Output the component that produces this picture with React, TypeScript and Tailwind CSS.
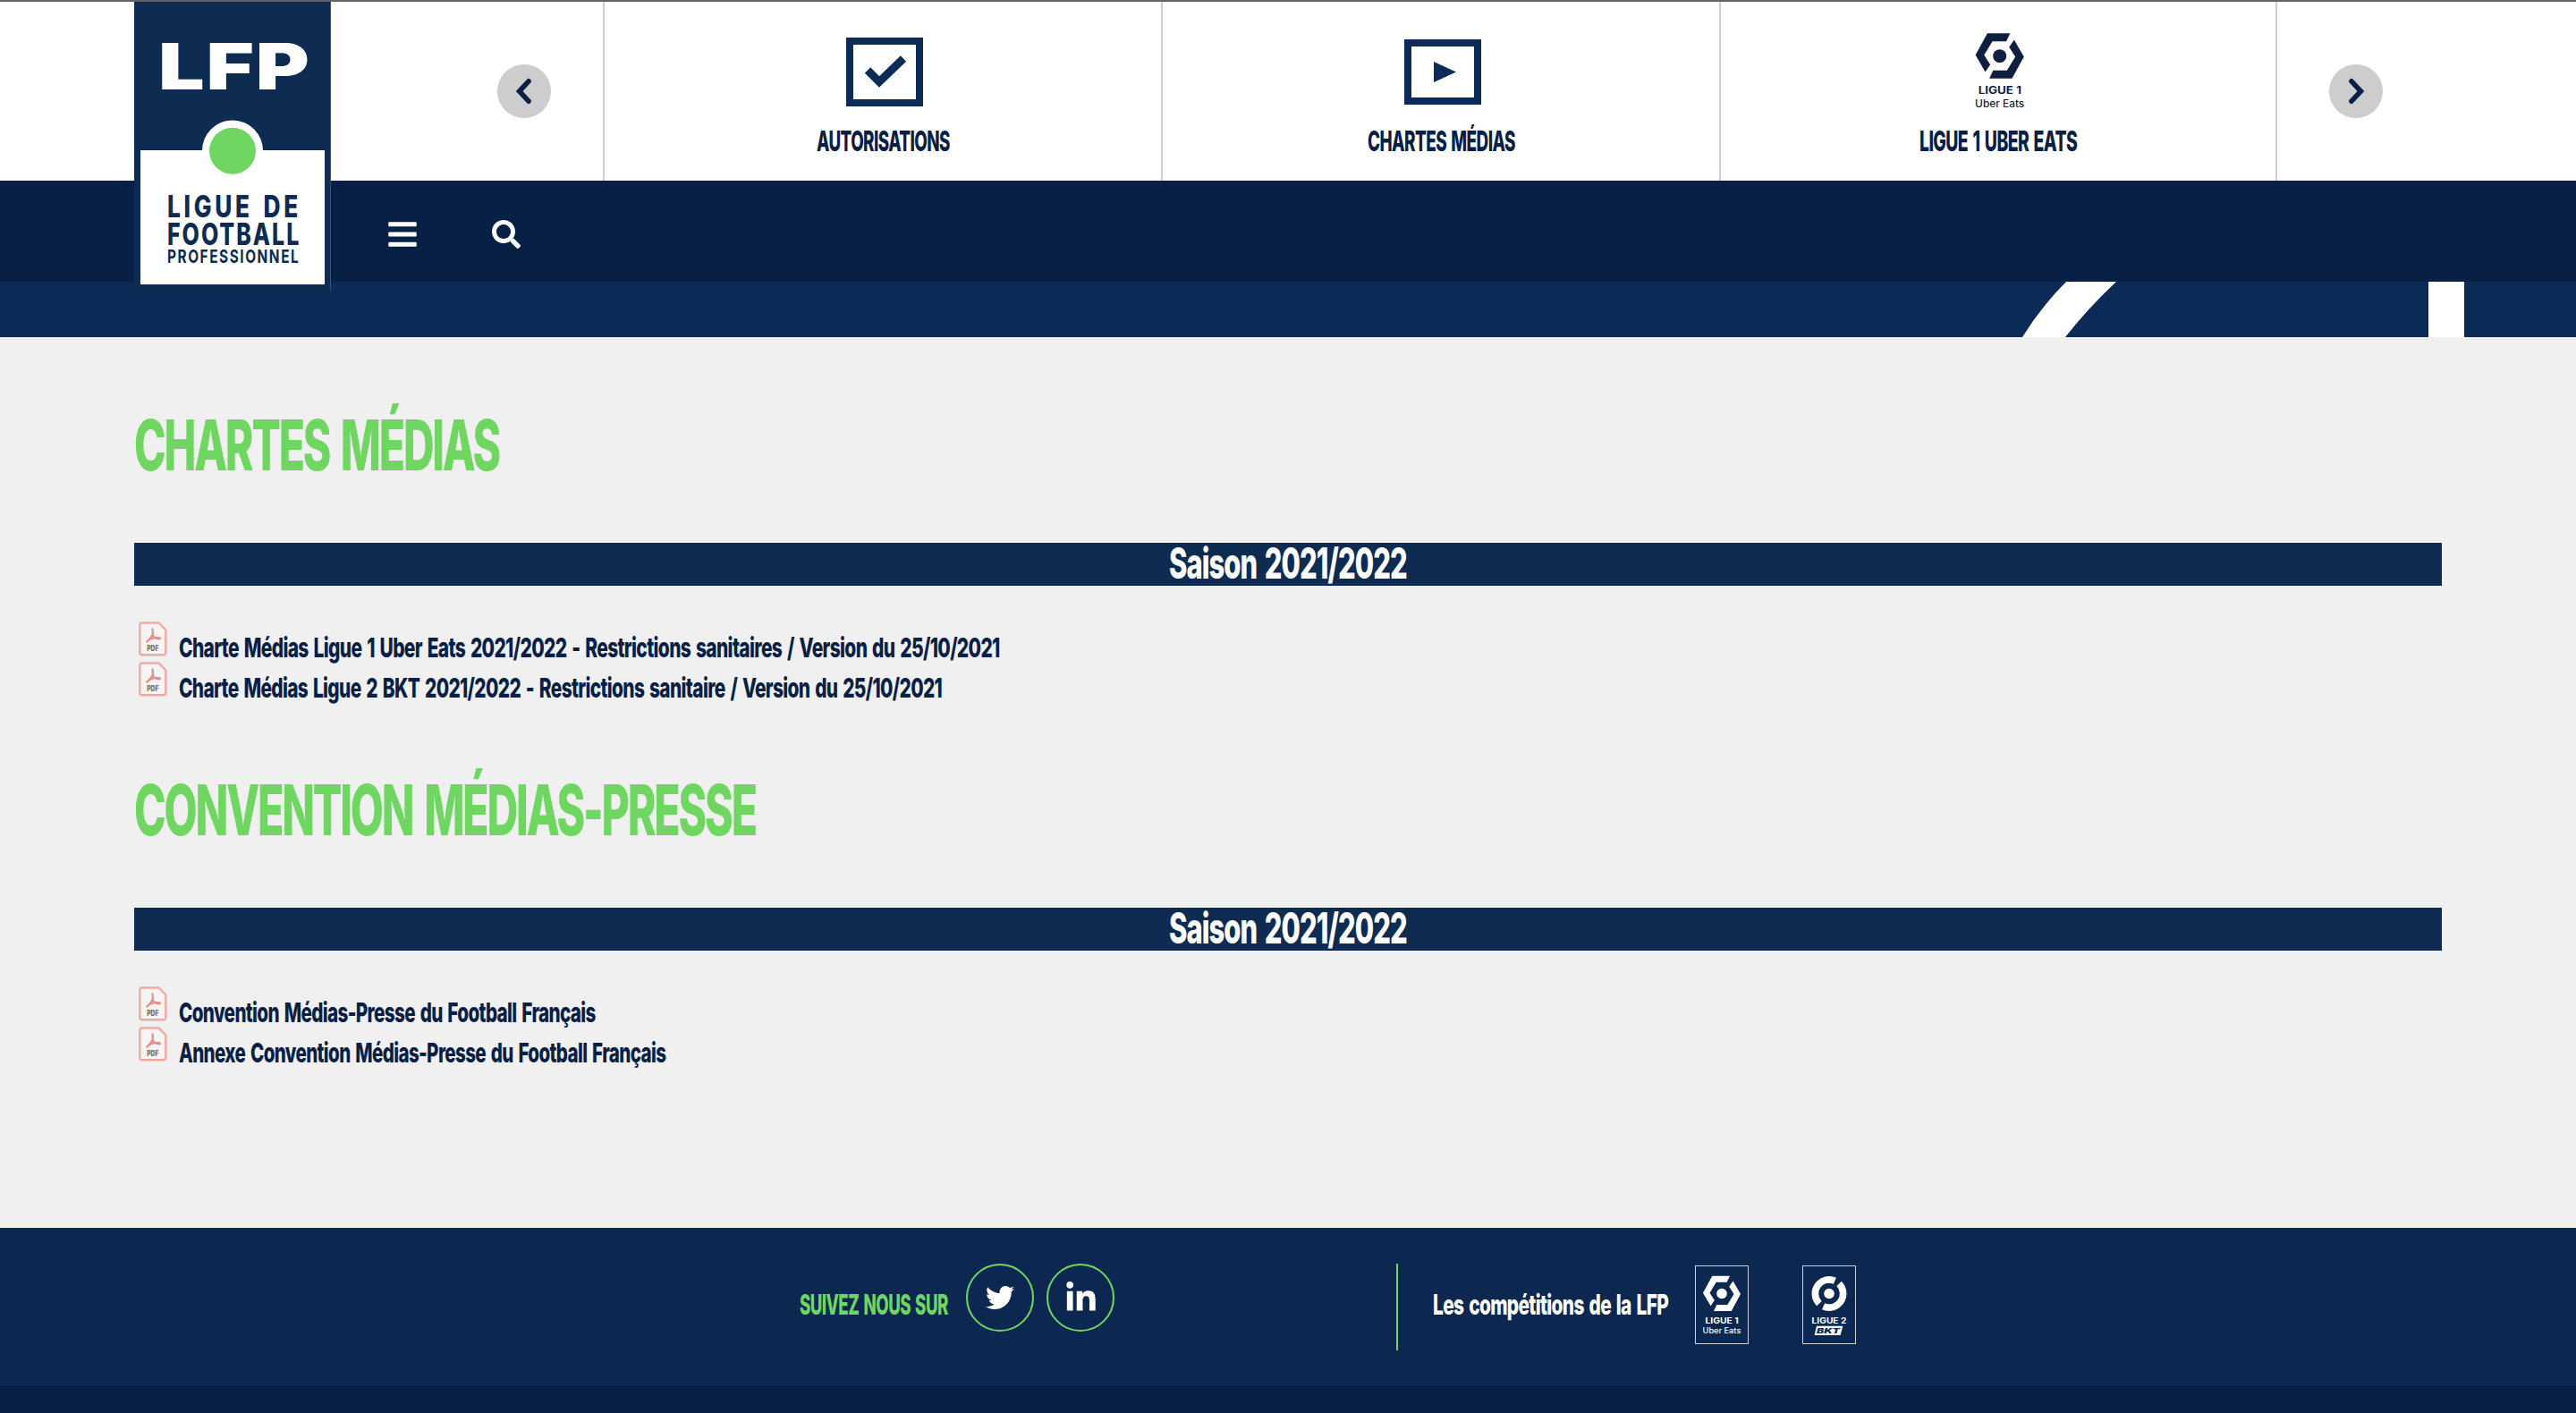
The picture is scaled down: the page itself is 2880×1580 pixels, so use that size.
import { useLayoutEffect, useRef, useState, type ReactNode } from "react";
import { FaBars, FaSearch, FaTwitter, FaLinkedinIn } from "react-icons/fa";

/* Condenses a line of text horizontally so that it occupies the given width. */
function Condensed({ children, width, className = "" }: { children: ReactNode; width: number; className?: string }) {
  const ref = useRef<HTMLSpanElement>(null);
  const [scale, setScale] = useState(0.6);
  useLayoutEffect(() => {
    if (ref.current) setScale(width / ref.current.offsetWidth);
  }, [width]);
  return (
    <span className={`block whitespace-nowrap [word-spacing:0.09em] ${className}`} style={{ width }}>
      <span ref={ref} className="inline-block origin-left" style={{ transform: `scaleX(${scale})` }}>
        {children}
      </span>
    </span>
  );
}

function LfpLogo() {
  return (
    <div className="absolute top-[2px] left-[150px] h-[323px] w-[220px]">
      <svg viewBox="0 0 220 323" className="absolute inset-0 h-[323px] w-[220px]">
        <rect width="220" height="323" fill="#0e2b52" />
        <rect x="219" width="1" height="323" fill="#3a5475" />
        <rect x="7" y="166" width="206" height="150" fill="#fff" />
        <circle cx="110" cy="166.5" r="34" fill="#fff" />
        <circle cx="110" cy="166.7" r="26" fill="#70d662" />
      </svg>
      <div className="relative flex flex-col pl-[37px] text-[#0e2b52]">
        <Condensed width={170} className="-ml-[10px] pt-[32px] text-[71.5px] leading-[80px] font-black tracking-[0.02em] text-white">LFP</Condensed>
        <Condensed width={150} className="mt-[104px] text-[33.5px] leading-[27px] font-extrabold tracking-[0.14em]">LIGUE DE</Condensed>
        <Condensed width={149} className="mt-[2px] text-[33.5px] leading-[30px] font-extrabold tracking-[0.08em]">FOOTBALL</Condensed>
        <Condensed width={148} className="text-[20.5px] leading-[20px] font-bold tracking-[0.1em]">PROFESSIONNEL</Condensed>
      </div>
    </div>
  );
}

function Ligue1Logo({ className }: { className: string }) {
  const half = "M19.3 11.8H39L35.7 18.8H23.7L16.5 30.7L21.8 39L17.5 45.3L9 30.7Z";
  return (
    <svg viewBox="0 0 60 88" className={className} fill="currentColor" fontFamily="Inter, sans-serif">
      <path d={half} />
      <path d={half} transform="rotate(180 30 31.4)" />
      <circle cx="30" cy="31.5" r="5.8" />
      <text x="11.4" y="64.5" fontSize="8.7" fontWeight="700" textLength="37.4" lengthAdjust="spacingAndGlyphs">LIGUE 1</text>
      <text x="8.6" y="75.6" fontSize="8.6" fontWeight="500" textLength="42.8" lengthAdjust="spacingAndGlyphs">Uber Eats</text>
    </svg>
  );
}

function Ligue2Logo({ className }: { className: string }) {
  return (
    <svg viewBox="0 0 60 88" className={className} fill="currentColor" fontFamily="Inter, sans-serif">
      <g fill="none" stroke="currentColor" strokeWidth="7.6">
        <path d="M36.4 17.2A15.7 15.7 0 0 0 18.9 42.6" />
        <path d="M23.6 45.8A15.7 15.7 0 0 0 41.1 20.4" />
      </g>
      <circle cx="30" cy="31.5" r="5.8" />
      <text x="10.6" y="64.5" fontSize="8.7" fontWeight="700" textLength="38.8" lengthAdjust="spacingAndGlyphs">LIGUE 2</text>
      <path d="M16 67.7H45.3L42.6 78H13.6Z" />
      <text x="16" y="75.8" fontSize="8.2" fontWeight="900" fontStyle="italic" fill="#0c2850" textLength="26" lengthAdjust="spacingAndGlyphs">BKT</text>
    </svg>
  );
}

function PdfIcon() {
  return (
    <svg viewBox="0 0 32 39" className="mt-px h-[39px] w-8 shrink-0" fill="none">
      <path d="M4 1.5H22.5L30.3 9.5V34.5Q30.3 37.2 27.6 37.2H4Q1.3 37.2 1.3 34.5V4.2Q1.3 1.5 4 1.5Z" fill="#f6f4f4" stroke="#efaaa4" strokeWidth="2.4" />
      <path d="M15.4 8.5C17.3 14 14.6 18.5 9.2 22.6M15.6 14.5C16.8 18 19.5 19.6 23.8 19.4M9.5 22C13.5 18.8 18 17.2 23.8 18.4" stroke="#e68f88" strokeWidth="2.2" strokeLinecap="round" />
      <text x="9.2" y="32.6" fontSize="8.4" fontWeight="900" fontFamily="Inter, sans-serif" fill="#777" textLength="13.2" lengthAdjust="spacingAndGlyphs">PDF</text>
    </svg>
  );
}

function Arrow({ d }: { d: string }) {
  return (
    <button className="flex size-[60px] items-center justify-center rounded-full bg-[#cdcdcd]">
      <svg viewBox="0 0 60 60" className="size-[60px]" fill="none" stroke="#082045" strokeWidth="5.6" strokeLinecap="round" strokeLinejoin="miter">
        <path d={d} />
      </svg>
    </button>
  );
}

function CheckIcon() {
  return (
    <svg viewBox="0 0 86 77" className="mt-[40px] ml-[4px] h-[77px] w-[86px]" fill="none" stroke="#0c2b57">
      <rect x="4" y="4" width="78" height="69" strokeWidth="8" />
      <path d="M24 36.5L37 49.5L64 23.5" strokeWidth="9" />
    </svg>
  );
}

function PlayIcon() {
  return (
    <svg viewBox="0 0 86 73" className="mt-[42px] ml-[4px] h-[73px] w-[86px]" fill="none" stroke="#0c2b57">
      <rect x="4" y="4" width="78" height="65" strokeWidth="8" />
      <path d="M33 25L58 36.5L33 48Z" fill="#0c2b57" stroke="none" />
    </svg>
  );
}

function Slide({ label, width, icon }: { label: string; width: number; icon: ReactNode }) {
  return (
    <div className="flex h-full w-[624px] shrink-0 flex-col items-center border-r-2 border-[#cdcdcd] last:w-[622px]">
      <div className="h-[133px] shrink-0">{icon}</div>
      <Condensed width={width} className="text-[31.5px] leading-[46px] font-extrabold tracking-[-0.03em] text-[#082045]">{label}</Condensed>
    </div>
  );
}

function DocumentSection({ title, titleWidth, docs }: { title: string; titleWidth: number; docs: { name: string; width: number }[] }) {
  return (
    <section>
      <h1>
        <Condensed width={titleWidth} className="pt-px text-[79px] leading-[80px] font-extrabold tracking-[-0.045em] text-[#70d662]">{title}</Condensed>
      </h1>
      <div className="mt-[70px] flex h-12 justify-center bg-[#0e2b52]">
        <Condensed width={266} className="text-[47.5px] leading-[46px] font-extrabold tracking-[-0.03em] text-white">Saison 2021/2022</Condensed>
      </div>
      <ul className="mt-[39px]">
        {docs.map((doc) => (
          <li key={doc.name} className="flex h-[45px] gap-[13px] pl-[5px]">
            <PdfIcon />
            <Condensed width={doc.width} className="pt-[7px] text-[30.5px] leading-[46px] font-extrabold tracking-[-0.03em] text-[#082045]">{doc.name}</Condensed>
          </li>
        ))}
      </ul>
    </section>
  );
}

export default function App() {
  return (
    <div className="relative flex h-[1580px] w-[2880px] flex-col overflow-hidden bg-[#f0f0f0] font-['Inter',sans-serif]">
      <header>
        <div className="flex h-[202px] border-t-2 border-[#646267] bg-white">
          <div className="flex w-[676px] items-center justify-end border-r-2 border-[#cdcdcd] pr-[58px]">
            <Arrow d="M35 18.8L24.6 30L35 41.2" />
          </div>
          <div className="flex w-[1870px]">
            <Slide label="AUTORISATIONS" width={149} icon={<CheckIcon />} />
            <Slide label="CHARTES MÉDIAS" width={165} icon={<PlayIcon />} />
            <Slide label="LIGUE 1 UBER EATS" width={176} icon={<Ligue1Logo className="mt-[20px] ml-[4px] h-[113.5px] w-[77.4px] text-[#101f40]" />} />
          </div>
          <div className="flex items-center pl-[58px]">
            <Arrow d="M25 18.8L35.4 30L25 41.2" />
          </div>
        </div>
        <nav className="flex h-[113px] items-center bg-[#082045] pt-[7px] pl-[434px] text-white">
          <FaBars className="h-[36px] w-8" />
          <FaSearch className="ml-[84px] size-8" />
        </nav>
        <div className="h-[62px] bg-[#0b2a56]">
          <svg viewBox="0 0 2880 62" className="h-[62px] w-[2880px]" fill="#fff">
            <path d="M2310 0H2366Q2334 30 2309 62H2261Q2282 28 2310 0Z" />
            <path d="M2715 0H2755V62H2715Z" />
          </svg>
        </div>
        <LfpLogo />
      </header>

      <main className="flex h-[996px] flex-col gap-[80px] px-[150px] pt-[79px]">
        <DocumentSection
          title="CHARTES MÉDIAS"
          titleWidth={408}
          docs={[
            { name: "Charte Médias Ligue 1 Uber Eats 2021/2022 - Restrictions sanitaires / Version du 25/10/2021", width: 918 },
            { name: "Charte Médias Ligue 2 BKT 2021/2022 - Restrictions sanitaire / Version du 25/10/2021", width: 853 },
          ]}
        />
        <DocumentSection
          title="CONVENTION MÉDIAS-PRESSE"
          titleWidth={695}
          docs={[
            { name: "Convention Médias-Presse du Football Français", width: 466 },
            { name: "Annexe Convention Médias-Presse du Football Français", width: 544 },
          ]}
        />
      </main>

      <footer className="flex grow flex-col bg-[#082045]">
        <div className="flex h-[177px] bg-[#0c2850] pt-10">
          <div className="flex w-[1561px] pl-[894px]">
            <Condensed width={166} className="pt-[23px] text-[31.5px] leading-[46px] font-extrabold tracking-[-0.03em] text-[#70d662]">SUIVEZ NOUS SUR</Condensed>
            <a className="ml-[20px] flex size-[76px] items-center justify-center rounded-full border-2 border-[#70d662] text-white">
              <FaTwitter className="size-8" />
            </a>
            <a className="ml-[14px] flex size-[76px] items-center justify-center rounded-full border-2 border-[#70d662] text-white">
              <FaLinkedinIn className="size-[37px]" />
            </a>
          </div>
          <div className="flex h-[97px] border-l-2 border-[#70d662] pl-[39px]">
            <Condensed width={263} className="pt-[23px] text-[31.5px] leading-[46px] font-extrabold tracking-[-0.03em] text-white">Les compétitions de la LFP</Condensed>
            <div className="mt-[2px] ml-[30px] h-[88px] w-[60px] text-white outline-1 -outline-offset-1 outline-[#ced4dc]">
              <Ligue1Logo className="h-[88px] w-[60px]" />
            </div>
            <div className="mt-[2px] ml-[60px] h-[88px] w-[60px] text-white outline-1 -outline-offset-1 outline-[#ced4dc]">
              <Ligue2Logo className="h-[88px] w-[60px]" />
            </div>
          </div>
        </div>
      </footer>
    </div>
  );
}
